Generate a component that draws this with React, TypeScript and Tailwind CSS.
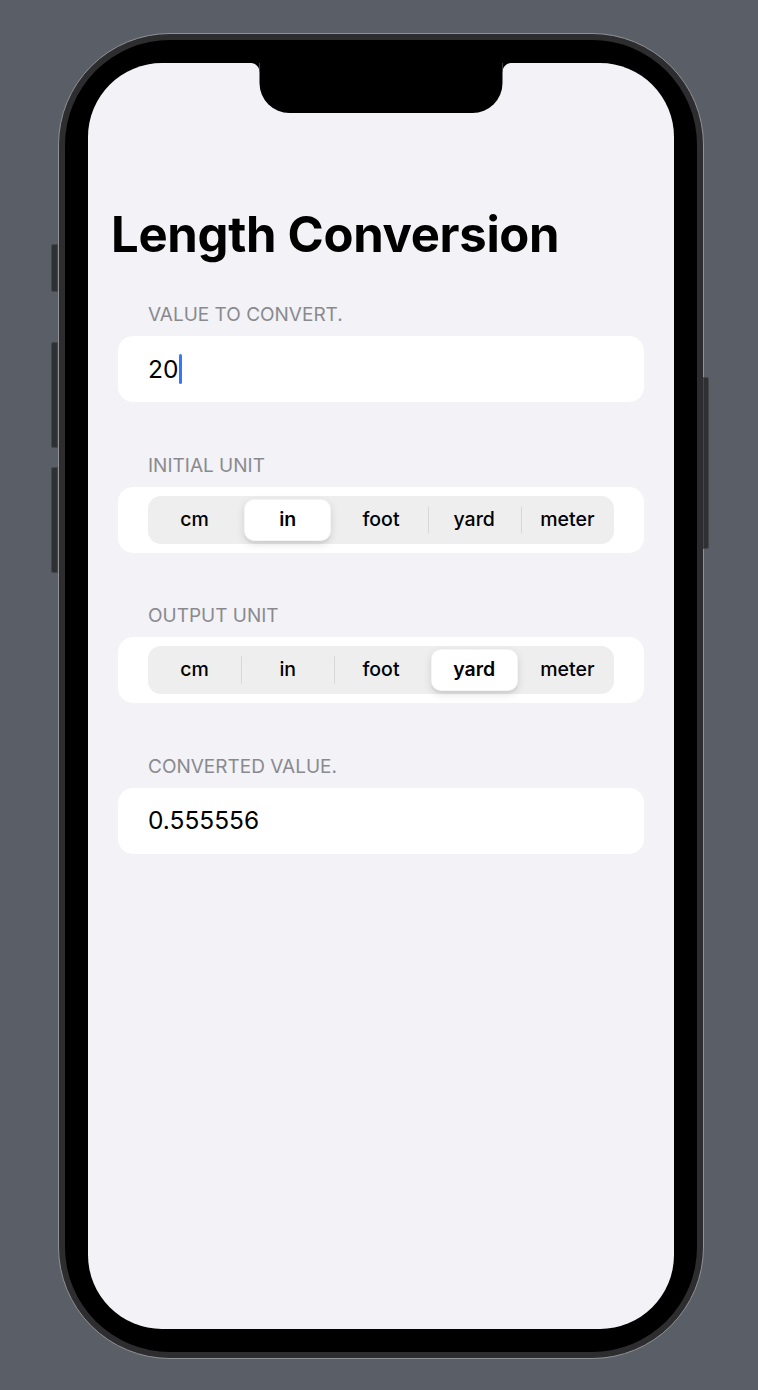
import React from "react";

const UNITS = ["cm", "in", "foot", "yard", "meter"];

function Segmented({ selected }: { selected: number }) {
  return (
    <div className="grid h-[48px] grid-cols-5 rounded-[13px] bg-[#eeeeef]">
      {UNITS.map((u, i) => {
        const sel = i === selected;
        const showSep = i > 0 && i !== selected && i - 1 !== selected;
        return (
          <div key={u} className="relative flex items-center justify-center">
            {showSep && (
              <span className="absolute left-0 top-1/2 h-[27px] w-px -translate-y-1/2 bg-[#d7d7db]" />
            )}
            {sel ? (
              <div className="m-[3px] flex h-[42px] w-full items-center justify-center rounded-[10px] border-[0.5px] border-black/[0.04] bg-white text-[19.5px] font-semibold text-black shadow-[0_3px_8px_rgba(0,0,0,0.12),0_3px_1px_rgba(0,0,0,0.04)]">
                {u}
              </div>
            ) : (
              <span className="text-[19.5px] font-medium text-black">{u}</span>
            )}
          </div>
        );
      })}
    </div>
  );
}

function Label({ children, first }: { children: React.ReactNode; first?: boolean }) {
  return (
    <div
      className={`${first ? "mt-[38px]" : "mt-[51.5px]"} mb-[9px] px-[30px] text-[19px] leading-[24px] text-[#8a8a8e] uppercase`}
    >
      {children}
    </div>
  );
}

export default function App() {
  return (
    <div className="min-h-[1390px] w-full bg-[#5a5e66] pl-[58px] pt-[33px] font-['Inter',sans-serif]">
      <div className="relative h-[1326px] w-[646px]">
        {/* side buttons */}
        <div className="absolute left-[-7px] top-[211px] h-[48px] w-[7px] rounded-l-[2px] border border-[#46474b] bg-[#2f3033]" />
        <div className="absolute left-[-7px] top-[309px] h-[106px] w-[7px] rounded-l-[2px] border border-[#46474b] bg-[#2f3033]" />
        <div className="absolute left-[-7px] top-[434px] h-[106px] w-[7px] rounded-l-[2px] border border-[#46474b] bg-[#2f3033]" />
        <div className="absolute right-[-5px] top-[344px] h-[172px] w-[6px] rounded-r-[2px] border border-[#46474b] bg-[#2f3033]" />

        <div className="h-full w-full rounded-[112px] border border-[#909195] bg-[#2d2d2f] p-[6px]">
          <div className="h-full w-full rounded-[105px] bg-black p-[23px]">
            <div className="relative h-full w-full overflow-hidden rounded-[74px] bg-[#f2f2f7]">
              {/* notch */}
              <div className="absolute left-1/2 top-0 h-[50px] w-[243px] -translate-x-1/2 rounded-b-[30px] bg-black">
                <div className="absolute left-[-9px] top-0 h-[9px] w-[9px] bg-[radial-gradient(circle_at_0_100%,transparent_8.5px,black_9.5px)]" />
                <div className="absolute right-[-9px] top-0 h-[9px] w-[9px] bg-[radial-gradient(circle_at_100%_100%,transparent_8.5px,black_9.5px)]" />
              </div>

              <div className="pt-[142px]">
                <h1 className="px-[23px] text-[49px] font-bold leading-[60px] tracking-[-0.3px] text-black">
                  Length Conversion
                </h1>

                <div className="px-[30px]">
                  <Label first>Value to convert.</Label>
                  <div className="flex h-[66px] items-center rounded-[15px] bg-white px-[30px]">
                    <span className="text-[24.5px] text-black">20</span>
                    <span className="ml-[1px] inline-block h-[30px] w-[3px] rounded-full bg-[#3478f6]" />
                  </div>

                  <Label>Initial unit</Label>
                  <div className="rounded-[15px] bg-white px-[30px] py-[9px]">
                    <Segmented selected={1} />
                  </div>

                  <Label>Output unit</Label>
                  <div className="rounded-[15px] bg-white px-[30px] py-[9px]">
                    <Segmented selected={3} />
                  </div>

                  <Label>Converted value.</Label>
                  <div className="flex h-[66px] items-center rounded-[15px] bg-white px-[30px]">
                    <span className="text-[24.5px] text-black">0.555556</span>
                  </div>
                </div>
              </div>
            </div>
          </div>
        </div>
      </div>
    </div>
  );
}
